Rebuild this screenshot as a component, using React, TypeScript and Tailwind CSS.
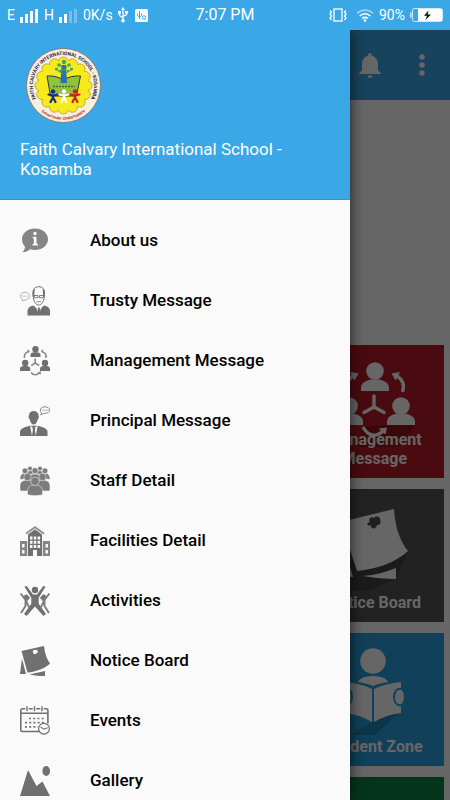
import type { ReactNode } from "react";

interface IconProps {
  children: ReactNode;
}

function MenuIcon({ children }: IconProps) {
  return (
    <svg viewBox="0 0 30 30" className="size-[30px] shrink-0 fill-[#707070] text-[#707070]" aria-hidden="true">
      {children}
    </svg>
  );
}

function AboutIcon() {
  return (
    <MenuIcon>
      <path fill="#858585" d="M15 2.500c7.200 0 13 4.600 13 10.800S22.200 24 15 24c-1.800 0-3.500-.3-5-.8-2 1.800-4.500 2.900-7.500 3 1.500-1.500 2.400-3.300 2.500-5.500-2-1.900-3-4.500-3-7.400C2 7.100 7.800 2.500 15 2.500z" />
      <circle cx="15" cy="7.500" r="1.700" fill="#fafafa" />
      <path fill="#fafafa" d="M12.800 10.800h3.700v7h1.400v1.700h-5.300v-1.700h1.300v-5.300h-1.100z" />
    </MenuIcon>
  );
}

function TrusteeIcon() {
  return (
    <MenuIcon>
      <path d="M7.500 29.500v-4.500c0-3 2-4.500 6-5.500l5.300 5 5.200-5c4 1 6 2.500 6 5.500v4.500z" />
      <path fill="#fafafa" d="M15.500 19.500l3.300 9 3.200-9z" />
      <path d="M18 21.500h1.700l.8 6-1.700 2-1.600-2z" />
      <path fill="#fafafa" stroke="currentColor" strokeWidth="1" d="M13 8.500C12.500 3 15 .7 18.700.7S25 3 24.500 8.500l-.6 4.500c-.6 3.600-3 6-5.200 6s-4.500-2.400-5.100-6z" />
      <path d="M12.700 11V6c.5-2 1.200-2.800 2.100-3.500l-.6 8zM24.700 11V6c-.5-2-1.200-2.800-2.100-3.500l.6 8z" />
      <path fill="none" stroke="currentColor" strokeWidth=".9" d="M14 9.500h4v2.200h-3.500zM19.500 9.500h4l-.4 2.200h-3.600z" />
      <path d="M16 15.500c1.500-.8 4-.8 5.500 0v.7h-5.500z" opacity=".7" />
      <path fill="none" stroke="#a0a0a0" strokeWidth=".8" d="M5 6.200c2.700 0 4.500 1.700 4.500 3.900S7.700 14 5 14l-2.800 1 .4-1.700C1.200 12.600.5 11.500.5 10.100.5 7.900 2.300 6.200 5 6.200z" />
      <path stroke="#a0a0a0" strokeWidth="1" strokeDasharray="1 1" d="M2.500 10.200h5" />
    </MenuIcon>
  );
}

function ManagementIcon() {
  return (
    <MenuIcon>
      <circle cx="15.500" cy="3.300" r="3.200" />
      <path d="M10.500 11V8.800c0-1.500 1.500-2.200 3.500-2.500h3c2 .3 3.500 1 3.500 2.500V11z" />
      <circle cx="5.200" cy="17" r="3.200" />
      <path d="M0 25v-2.500c0-1.500 1.600-2.200 3.600-2.500h3.200c2 .3 3.400 1 3.400 2.500V25z" />
      <circle cx="25" cy="17" r="3.200" />
      <path d="M20 25v-2.500c0-1.500 1.600-2.200 3.600-2.500h3.200c2 .3 3.200 1 3.200 2.500V25z" />
      <g fill="none" stroke="#8a8a8a" strokeWidth="1.600">
        <path d="M15.200 12.500v4.500l-4 2.500M15.200 17l4 2.500" />
        <path d="M4.500 12C4 8.500 5.500 6.500 8.500 5.500M26 12c.5-3.500-1-5.500-4-6.500" />
        <path d="M11 26.500c2.500 3 6 3 8.500 0" />
      </g>
      <path fill="#8a8a8a" d="M7.300 3.200l2.600 1.700L8 7.300zM23.300 3.200l-2.600 1.700 2 2.400zM17.500 26.500l3.500-1.300-.3 3.500z" />
    </MenuIcon>
  );
}

function PrincipalIcon() {
  return (
    <MenuIcon>
      <path d="M9 9.500C9 6.500 11 5 13.700 5s4.800 1.500 4.800 4.500c1 1.500 0 3-.6 3.500-.7 3.500-2.200 5.500-4.200 5.500S10.200 16.500 9.600 13C8.800 12.500 8 11 9 9.500z" />
      <path d="M0 30v-4c0-3 3-4.500 9.500-6.300h8.500c6.500 1.800 9.500 3.300 9.500 6.300v4z" />
      <path fill="#fafafa" d="M10 19.500l2 10.500h3.800l2-10.500-4 3z" />
      <path d="M12.500 22h2.800l-.4 2 1 6h-4l1-6z" />
      <path fill="none" stroke="#8a8a8a" strokeWidth="1" d="M25 .8c2.800 0 4.500 1.400 4.500 3.200S27.800 7.300 25 7.300h-1l-3.300 1.500.7-2.400c-.6-.6-1-1.400-1-2.400C20.400 2.200 22.200.8 25 .8z" />
      <path stroke="#8a8a8a" strokeWidth="1.200" strokeDasharray="1 1" d="M22.500 4.200h5" />
    </MenuIcon>
  );
}

function StaffIcon() {
  return (
    <MenuIcon>
      <g fill="#7c7c7c" stroke="#fafafa" strokeWidth=".5">
        <path d="M6.500 10c0-4 2-5.500 4-5.500s3 1 3 3zM23.500 10c0-4-2-5.500-4-5.500s-3 1-3 3z" />
        <circle cx="10" cy="2.500" r="2.300" />
        <circle cx="20" cy="2.500" r="2.300" />
        <path d="M0 13.500C0 9 2 7.300 5 7.300s4 2 4 5zM30 13.500c0-4.500-2-6.200-5-6.200s-4 2-4 5z" />
        <circle cx="5" cy="4.800" r="2.800" />
        <circle cx="25" cy="4.800" r="2.800" />
        <path d="M8 15c0-5 3-7 7-7s7 2 7 7z" />
        <circle cx="15" cy="4.700" r="3" />
        <path d="M0 24v-4c0-4 3-6 7-6s6 2 6 6l-2 5H3c-1.500 0-3 0-3-1zM30 24v-4c0-4-3-6-7-6s-6 2-6 6l2 5h8c1.500 0 3 0 3-1z" />
        <circle cx="7.500" cy="11" r="3.700" />
        <circle cx="22.500" cy="11" r="3.700" />
        <path d="M7.500 28.500V25c0-4 3-6.300 7.500-6.300s7.500 2.300 7.500 6.300v3.500c-3 1.500-12 1.500-15 0z" />
        <circle cx="15" cy="15.300" r="4.200" />
      </g>
    </MenuIcon>
  );
}

function FacilitiesIcon() {
  return (
    <MenuIcon>
      <path d="M15 0l9.500 7-1 1.500L15 2.300 6.500 8.500l-1-1.500z" opacity=".8" />
      <path d="M15 3.200l7 5.300V30H8V8.500z" />
      <path d="M0 15h7.200v15H0zM22.800 15H30v15h-7.200z" opacity=".85" />
      <g fill="#fafafa">
        <path d="M10 10.500h2.500v3H10zM13.800 10.500h2.500v3h-2.500zM17.600 10.500h2.500v3h-2.500zM10 14.700h2.500v3H10zM13.800 14.700h2.500v3h-2.500zM17.600 14.700h2.500v3h-2.500zM10 18.900h2.500v3H10zM13.800 18.900h2.500v3h-2.500zM17.600 18.900h2.500v3h-2.500z" />
        <path d="M2 18h2.500v3.500H2zM2 24h2.500v3.500H2zM25.500 18H28v3.500h-2.500zM25.500 24H28v3.500h-2.500zM13 24h4v6h-4z" />
      </g>
    </MenuIcon>
  );
}

function ActivitiesIcon() {
  return (
    <MenuIcon>
      <circle cx="15" cy="4" r="3.200" />
      <path d="M4.500.8l2-1L13 8.500h4L23.500-.2l2 1-6.800 11v6L26 28l-2.500 2L15 20.500 6.500 30 4 28l7.300-10.200v-6z" />
      <g fill="none" stroke="#7c7c7c" strokeWidth="1.900">
        <path d="M.7 7.500L5.500 14v6L1 27M9.500 11L6 15l3.500 7M29.300 7.500L24.500 14v6l4.500 7M20.500 11l3.500 4-3.500 7" />
      </g>
      <circle cx="6.300" cy="10.800" r="2.200" />
      <circle cx="23.700" cy="10.800" r="2.200" />
    </MenuIcon>
  );
}

function NoticeIcon() {
  return (
    <MenuIcon>
      <path d="M1.500 5L24 0c.8 7 2.500 13 6 17.500-4.500 4.500-14 8.500-22.500 9z" />
      <path d="M2 12.500L6 28H0zM9.500 28.500L25 25v5c-5 0-10-.5-15.500-1.500z" />
      <path fill="#fafafa" d="M12.800 5.500c0-1.500 1.500-2 2.500-1.300 1.200-1 2.700.1 2.300 1.600.3 1-.7 1.800-1.600 1.600-.6 1.200-2.600 1-2.500-.4-.6-.3-.7-.9-.7-1.500z" />
    </MenuIcon>
  );
}

function EventsIcon() {
  return (
    <MenuIcon>
      <path fill="none" stroke="currentColor" strokeWidth="1.600" d="M19 25.500H2.500c-1 0-1.700-.7-1.700-1.700V4.500c0-1 .7-1.700 1.700-1.700h23.700c1 0 1.700.7 1.700 1.700v13M1 7.300h27" />
      <path stroke="#fafafa" strokeWidth="3.500" d="M7 1v4M14.500 1v4M22 1v4" />
      <path stroke="currentColor" strokeWidth="1.400" d="M7 .2v5M14.500.2v5M22 .2v5" />
      <path stroke="currentColor" strokeWidth="1.700" strokeDasharray="2 2.200" d="M9 12.500h16M5 16.700h20M5 20.900h13" />
      <circle cx="24" cy="22.700" r="5.400" fill="#fafafa" stroke="currentColor" strokeWidth="1.200" />
      <path fill="none" stroke="currentColor" strokeWidth="1.100" d="M20.500 21l3.500 2.200 3.700-1.500" />
    </MenuIcon>
  );
}

function GalleryIcon() {
  return (
    <MenuIcon>
      <path d="M0 30L8 4l8.500 16 6-4.500L30 30z" />
      <ellipse cx="26.200" cy="5" rx="3.800" ry="5" />
    </MenuIcon>
  );
}

const menu = [
  { label: "About us", icon: AboutIcon },
  { label: "Trusty Message", icon: TrusteeIcon },
  { label: "Management Message", icon: ManagementIcon },
  { label: "Principal Message", icon: PrincipalIcon },
  { label: "Staff Detail", icon: StaffIcon },
  { label: "Facilities Detail", icon: FacilitiesIcon },
  { label: "Activities", icon: ActivitiesIcon },
  { label: "Notice Board", icon: NoticeIcon },
  { label: "Events", icon: EventsIcon },
  { label: "Gallery", icon: GalleryIcon },
];

function SchoolLogo() {
  // scalloped edge of the yellow badge
  const petals = Array.from({ length: 16 }, (_, i) => (i * Math.PI) / 8);
  return (
    <svg viewBox="0 0 75 75" className="size-[75px]" role="img" aria-label="School logo">
      <defs>
        <path id="logo-top" d="M14.100 57.100A30.500 30.500 0 1 1 60.900 57.100" />
        <path id="logo-bottom" d="M11.800 60.100A34.200 34.200 0 0 0 63.200 60.100" />
      </defs>
      <circle cx="37.500" cy="37.500" r="37" fill="#f7efe0" stroke="#8a6a62" strokeWidth=".8" />
      <g fill="#f7ea1c" stroke="#b79a20" strokeWidth=".8">
        {petals.map((a) => (
          <circle key={a} cx={37.5 + 23.5 * Math.cos(a)} cy={37.5 + 23.5 * Math.sin(a)} r="5" />
        ))}
      </g>
      <circle cx="37.500" cy="37.500" r="25" fill="#f7ea1c" />
      <text fontSize="4.900" fontWeight="700" fill="#23284a" textAnchor="middle">
        <textPath href="#logo-top" startOffset="50%">FAITH CALVARY INTERNATIONAL SCHOOL - KOSAMBA</textPath>
      </text>
      <text fontSize="3.700" fontWeight="700" fill="#b0221c" textAnchor="middle">
        <textPath href="#logo-bottom" startOffset="50%">School Under CHRISTIANITY</textPath>
      </text>
      <path fill="#8fc43a" stroke="#2b3a1c" strokeWidth="1" d="M21 28c6-.5 12 1 16.500 4 4.500-3 10.500-4.500 17-4l-4 20h-26z" />
      <path stroke="#476a26" strokeWidth="1.500" strokeDasharray="2 1" d="M27 38.500h22" />
      <path fill="#2a6fae" d="M35.500 17h4.500l1 18h-6.500z" />
      <g fill="#39a86a">
        <circle cx="38" cy="14" r="2.200" />
        <circle cx="33" cy="17" r="1.800" />
        <circle cx="43" cy="17" r="1.800" />
        <circle cx="30.500" cy="21" r="1.600" />
        <circle cx="45.500" cy="21" r="1.600" />
        <circle cx="34" cy="23" r="1.300" />
        <circle cx="42" cy="23" r="1.300" />
      </g>
      <path fill="none" stroke="#39a86a" strokeWidth="1" d="M31 22l6 4M45 22l-6 4M34 17l4 6 4-6" />
      {[
        { x: 27, c: "#1c2a8c" },
        { x: 38, c: "#ffffff" },
        { x: 49, c: "#cf1f1f" },
      ].map(({ x, c }) => (
        <g key={x} fill={c} stroke={c} strokeLinecap="round">
          <circle cx={x} cy="43.500" r="1.800" />
          <path fill="none" strokeWidth="2.200" d={`M${x - 4.5} 46.500L${x} 47.500l4.500-1M${x} 47.500v2l-2.500 4.500M${x} 49.500l2.500 4.500`} />
        </g>
      ))}
    </svg>
  );
}

function SignalBars({ level }: { level: number }) {
  return (
    <svg viewBox="0 0 19 15" className="h-[15px] w-[19px]" aria-hidden="true">
      {[6, 9, 12, 14].map((h, i) => (
        <rect key={h} x={i * 5} y={15 - h} width="3" height={h} fill="#fff" opacity={i < level ? 1 : 0.3} />
      ))}
    </svg>
  );
}

function UsbIcon() {
  return (
    <svg viewBox="0 0 10 16" className="h-4 w-2.5" fill="none" stroke="#fff" strokeWidth="1.300" aria-hidden="true">
      <path d="M5 2v11M5 11L1.500 8.500v-3M5 9.500l3.500-2V5" />
      <path fill="#fff" stroke="none" d="M5 0l2 3H3zM0 4h3v3H0zM7 4h3v2.500H7z" />
      <circle cx="5" cy="13.700" r="1.800" fill="#fff" stroke="none" />
    </svg>
  );
}

function StatusBar() {
  return (
    <div className="grid h-[30px] shrink-0 grid-cols-[1fr_auto_1fr] items-center bg-[#3aa7e7] px-[7px] text-white">
      <div className="flex items-center gap-[5px]">
        <span className="text-sm">E</span>
        <SignalBars level={4} />
        <span className="text-sm">H</span>
        <SignalBars level={2} />
        <span className="text-sm">0K/s</span>
        <UsbIcon />
        <svg viewBox="0 0 13 13" className="ml-0.5 size-[13px]" aria-hidden="true">
          <rect width="13" height="13" rx="1.500" fill="#fff" />
          <path fill="none" stroke="#3aa7e7" strokeWidth="1" d="M4.500 2v8M2.500 4.500v2l2 1.500 2-1.500v-2" />
          <circle cx="9" cy="8.500" r="1.700" fill="none" stroke="#3aa7e7" />
        </svg>
      </div>
      <span className="text-base">7:07 PM</span>
      <div className="flex items-center justify-end gap-[5px]">
        <svg viewBox="0 0 18 14" className="mr-1 h-3.5 w-[18px]" fill="none" stroke="#fff" strokeWidth="1.300" aria-hidden="true">
          <rect x="5" y="1" width="8" height="12" />
          <path d="M1 2.500l1.500 1.500L1 6l1.500 2L1 10l1.500 2M17 2.500L15.500 4 17 6l-1.500 2 1.500 2-1.500 2" />
        </svg>
        <svg viewBox="0 0 18 14" className="h-3.5 w-[18px]" fill="none" stroke="#fff" strokeWidth="1.700" aria-hidden="true">
          <path d="M1 5.500c4.500-4.600 11.500-4.600 16 0" opacity=".5" />
          <path d="M3.700 8c3-3 7.600-3 10.600 0M6.300 10.500c1.500-1.500 3.900-1.500 5.400 0" />
          <circle cx="9" cy="12.500" r="1.300" fill="#fff" stroke="none" />
        </svg>
        <span className="text-sm">90%</span>
        <svg viewBox="0 0 33 14" className="h-3.5 w-[33px]" aria-hidden="true">
          <rect x="2.500" y=".5" width="30" height="13" rx="2" fill="none" stroke="#cfeaf8" />
          <rect x="0" y="4.500" width="1.500" height="5" fill="#cfeaf8" />
          <rect x="8" y="1" width="24" height="12" fill="#fff" />
          <path fill="#111" d="M18.500 2.500L14 7.700h3l-1.500 4.300 5.500-5.500h-3.300z" />
        </svg>
      </div>
    </div>
  );
}

function ManagementArt() {
  const person = "M0 19v-3c0-5 4-7 10-8.500h8c6 1.500 10 3.500 10 8.500v3z";
  return (
    <svg viewBox="0 0 90 90" className="size-[90px]" fill="#fff" aria-hidden="true">
      <path fill="#8f151d" d="M58 68h28L70 90H30l4-20z" />
      <circle cx="46" cy="14" r="8.800" />
      <path transform="translate(32 15)" d={person} />
      <circle cx="20" cy="49" r="8.800" />
      <path transform="translate(6 49)" d={person} />
      <circle cx="72" cy="49" r="8.800" />
      <path transform="translate(58 49)" d={person} />
      <g fill="none" stroke="#fff" strokeWidth="3.400">
        <path strokeLinecap="round" d="M45 39v11M35 55.500L45 50l10 5.500" />
        <path d="M73.500 35c2.500-8 0-13-6.500-16.500M18.500 35c-2.500-8 0-13 6.500-16.500" />
        <path d="M34 70c5 9.500 13.500 10.500 20 4" />
      </g>
      <path d="M62.500 16.500l8.500-1.500-4.500 8.500zM29.500 16.500L21 15l4.500 8.500zM58 70.500l-8.500 1 7 6z" />
    </svg>
  );
}

function NoticeArt() {
  return (
    <svg viewBox="0 0 90 90" className="size-[90px]" fill="#fff" aria-hidden="true">
      <path fill="#444" d="M79 50L66 78 40 90H10l5-30z" />
      <path d="M12 21l53-13c1 16 5 31 14 42-12 11-30 18-51 20z" />
      <path d="M34 75c12-1 23-4 33-8v11c-11 0-22-1-33-3zM13 38l11 38H6z" />
      <path fill="#4f4f4f" d="M41 21c-2-3 1-6 4-4 2-3 7-1 6 2 2 3-1 5-3 5-1 5-7 4-6 0-3 2-6-2-1-3z" />
    </svg>
  );
}

function StudentArt() {
  return (
    <svg viewBox="0 0 90 90" className="size-[90px]" fill="#fff" aria-hidden="true">
      <path fill="#2287bb" d="M72 66L46 90H20l24-14z" />
      <circle cx="44" cy="16" r="12.800" />
      <path d="M29 37c3-8 27-8 30 0-6 1-11 2-15 4-4-2-9-3-15-4z" />
      <path d="M43 44c-8-4-17-6-27-7v31c10 1 19 4 27 9zM45 44c8-4 17-6 27-7v31c-10 1-19 4-27 9z" />
      <g stroke="#2aa0e2" strokeWidth="2">
        <path d="M73 44c4 4 4 12 0 16-5 1-8-2-8-8s3-9 8-8zM15 44c-4 4-4 12 0 16 5 1 8-2 8-8s-3-9-8-8z" />
      </g>
    </svg>
  );
}

function DashboardTile({ title, color, children }: { title: string; color: string; children?: ReactNode }) {
  return (
    <a
      href="#"
      className={`col-start-3 grid h-[133px] justify-items-center px-4 pt-3 pb-2.5 text-center text-base leading-[19px] font-bold text-white ${color}`}
    >
      <span className="col-start-1 row-start-1">{children}</span>
      <span className="col-start-1 row-start-1 self-end">{title}</span>
    </a>
  );
}

function Dashboard() {
  return (
    <div className="bg-white">
      <header className="flex h-[70px] items-center justify-end gap-[38px] bg-[#3aa7e7] pr-[25px]">
        <button type="button" aria-label="Notifications">
          <svg viewBox="0 0 22 25" className="h-[25px] w-[22px]" fill="#fff">
            <path d="M11 0c1.200 0 1.800.8 1.800 2v.8c4 1 6.200 4 6.200 8.200v6l3 3.500V21H0v-.5L3 17v-6c0-4.200 2.200-7.200 6.200-8.200V2C9.200.8 9.800 0 11 0zM8.500 22.500h5c0 3.300-5 3.300-5 0z" />
          </svg>
        </button>
        <button type="button" aria-label="More options">
          <svg viewBox="0 0 6 22" className="h-[22px] w-1.5" fill="#fff">
            <circle cx="3" cy="3" r="2.700" />
            <circle cx="3" cy="11" r="2.700" />
            <circle cx="3" cy="19" r="2.700" />
          </svg>
        </button>
      </header>
      <main className="grid grid-cols-3 gap-x-2.5 gap-y-[11px] px-1.5 pt-[245px]">
        <DashboardTile title="Management Message" color="bg-[#b71c26]">
          <ManagementArt />
        </DashboardTile>
        <DashboardTile title="Notice Board" color="bg-[#555555]">
          <NoticeArt />
        </DashboardTile>
        <DashboardTile title="Student Zone" color="bg-[#2aa0e2]">
          <StudentArt />
        </DashboardTile>
        <DashboardTile title="" color="bg-[#0a8446]" />
      </main>
    </div>
  );
}

function Drawer() {
  return (
    <aside className="absolute inset-y-0 left-0 w-[350px] overflow-hidden bg-[#fafafa] shadow-[0_0_14px_rgba(0,0,0,0.7)]">
      <div className="border-b border-[#2f97cf] bg-[#3aa7e7] px-5 pt-[18px] pb-5 text-white">
        <div className="pl-1.5">
          <SchoolLogo />
        </div>
        <p className="pt-4 text-[17px] leading-5">Faith Calvary International School - Kosamba</p>
      </div>
      <nav className="pt-[11px]">
        {menu.map(({ label, icon: Icon }) => (
          <a key={label} href="#" className="flex h-[60px] items-center gap-10 px-5 text-[17px] font-medium text-black">
            <Icon />
            {label}
          </a>
        ))}
      </nav>
    </aside>
  );
}

export default function App() {
  return (
    <div className="flex h-screen flex-col font-[Roboto,sans-serif]">
      <StatusBar />
      <div className="relative flex-1 overflow-hidden">
        <Dashboard />
        <div className="absolute inset-0 bg-black/60" />
        <Drawer />
      </div>
    </div>
  );
}
